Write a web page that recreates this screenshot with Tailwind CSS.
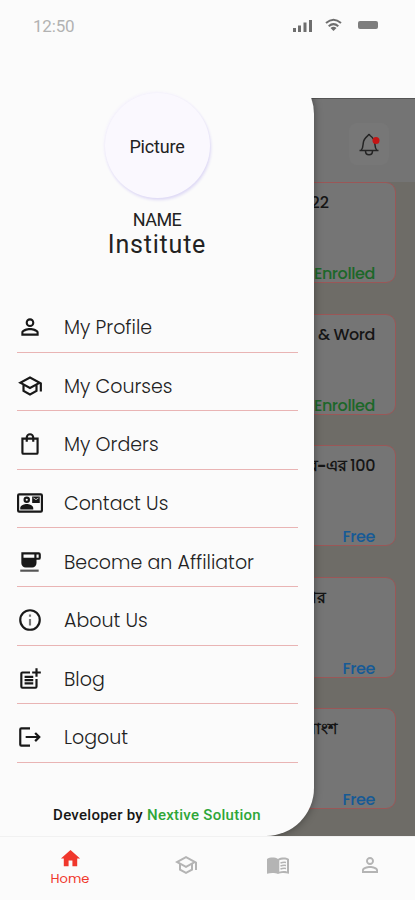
<!DOCTYPE html>
<html lang="en">
<head>
<meta charset="utf-8">
<title>Institute</title>
<script src="https://cdn.jsdelivr.net/npm/@tailwindcss/browser@4"></script>
</head>
<body class="bg-[#fbfbfb]">
<div class="relative flex h-[900px] w-[415px] flex-col overflow-hidden bg-[#fbfbfb] font-['Poppins',Inter,'Noto_Sans',sans-serif]">
  <!-- Status bar -->
  <div class="flex h-[98px] shrink-0 items-start justify-between pl-[33px] pr-[37px] pt-4">
    <span class="font-[Roboto,sans-serif] text-[17px] leading-5 tracking-[-0.2px] text-[#b2b2b2]">12:50</span>
    <div class="flex items-center pt-[2px]">
      <svg class="h-[13px] w-5" viewBox="0 0 20 13" fill="#6e6e6e"><rect x="0" y="9" width="3" height="4"/><rect x="5" y="6.500" width="3" height="6.500"/><rect x="10.500" y="3.500" width="3" height="9.500"/><rect x="16" y="1" width="3" height="12"/></svg>
      <svg class="ml-3 h-[14px] w-[17px]" viewBox="0 0 17 14" fill="none" stroke="#6e6e6e" stroke-width="2"><path d="M1 5Q8.500-1.500 16 5"/><path d="M3.700 8.200Q8.500 4 13.300 8.200"/><path d="M5.500 10Q8.500 7.500 11.500 10L8.500 13Z" fill="#6e6e6e" stroke="none"/></svg>
      <div class="ml-4 h-2 w-5 rounded-[2px] bg-[#7d7d7d]"></div>
    </div>
  </div>

  <!-- Dimmed course list -->
  <main class="flex h-[738px] shrink-0 flex-col overflow-hidden border-t border-[#555] bg-[#6e6c67]">
    <header class="flex h-[83px] shrink-0 items-start justify-end bg-[#747474] pr-[26px] pt-[24px]">
      <div class="flex h-[42px] w-10 items-center justify-center rounded-lg bg-[#777]">
        <svg class="h-6 w-6" viewBox="0 0 24 24" fill="none" stroke="#242424" stroke-width="1.500" stroke-linejoin="round"><path d="M2.500 18.500h19M4 18.500c2-2 2-4 2.200-7C6.500 7 8.500 5.500 11 3.500q1-2 2 0c3 2 4.500 4.500 4.800 8 .2 3 .2 5 2.200 7M8.500 19c0 5 7 5 7 0"/><circle cx="19" cy="8.500" r="3.500" fill="#c51414" stroke="none"/></svg>
      </div>
    </header>
    <div class="flex flex-col gap-[30.500px] pl-[18px] pr-[19px] text-right text-base font-medium leading-6 text-[#151515] [&>section]:flex [&>section]:h-[101px] [&>section]:shrink-0 [&>section]:flex-col [&>section]:justify-between [&>section]:rounded-[10px] [&>section]:border [&>section]:border-[#9a5757] [&>section]:bg-[#757575] [&>section]:pr-5 [&>section]:pt-[8px] [&_p]:-mb-[4px] [&_p]:tracking-[-0.4px]">
      <section><h2 class="pr-[46px]">22</h2><p class="text-[#1c6729]">Enrolled</p></section>
      <section><h2 class="tracking-[-0.4px]">&amp; Word</h2><p class="text-[#1c6729]">Enrolled</p></section>
      <section><h2 class="tracking-[-0.4px]"><span class="font-bold">র-এর</span> 100</h2><p class="text-[#165a96]">Free</p></section>
      <section><h2 class="pr-[49px] font-bold">ার</h2><p class="text-[#165a96]">Free</p></section>
      <section><h2 class="pr-[38px] font-bold">বাংশ</h2><p class="text-[#165a96]">Free</p></section>
    </div>
  </main>

  <!-- Bottom navigation -->
  <nav class="relative z-10 flex h-16 shrink-0 items-start border-t border-[#f1f1f1] bg-[#fbfbfb] text-[#b4b4b4]">
    <div class="flex w-[140px] flex-col items-center pt-2.5 text-[#f0372c]">
      <svg class="h-[23px] w-[23px]" viewBox="0 0 24 24" fill="currentColor"><path d="M10 20v-6h4v6h5v-8h3L12 3 2 12h3v8z"/></svg>
      <span class="text-[13px] leading-[18px]">Home</span>
    </div>
    <div class="flex w-[92px] justify-center pt-4"><svg class="h-6 w-6" viewBox="0 0 24 24" fill="currentColor"><path d="M12 3 1 9l4 2.180v6L12 21l7-3.820v-6l2-1.090V17h2V9L12 3zm6.820 6L12 12.720 5.180 9 12 5.280 18.820 9zM17 16l-5 2.720L7 16v-3.730L12 15l5-2.730V16z"/></svg></div>
    <div class="flex w-[92px] justify-center pt-4"><svg class="h-6 w-6" viewBox="0 0 24 24" fill="currentColor"><path d="M12 6C10.500 4.900 8.400 4.500 6.500 4.500S2.450 4.900 1 6v14.700C2.900 20.200 4.700 20 6.500 20c1.900 0 4 .400 5.500 1z"/><path d="M21 5c-1.110-.35-2.330-.5-3.500-.5-1.950 0-4.050.4-5.500 1.500v15c1.350-.6 3.800-1 5.500-1s3.600.2 5.500.7V6c-.6-.45-1.250-.75-2-1zm0 13.500c-1.100-.35-2.300-.5-3.500-.5-1.500 0-3 .3-4.200.8V7.300C14.600 6.800 16.200 6.500 17.500 6.500c1.200 0 2.400.15 3.500.5z"/><path d="M14.500 10q2.800-1 5.500-.5M14.500 13q2.800-1 5.500-.5M14.500 16q2.800-1 5.500-.5" fill="none" stroke="currentColor" stroke-width="1.500"/></svg></div>
    <div class="flex w-[91px] justify-center pt-4"><svg class="h-6 w-6" viewBox="0 0 24 24" fill="currentColor"><path d="M12 5.900a2.100 2.100 0 1 1 0 4.200 2.100 2.100 0 0 1 0-4.200m0 9c2.970 0 6.100 1.460 6.100 2.100v1.100H5.900V17c0-.64 3.130-2.100 6.100-2.100M12 4C9.790 4 8 5.790 8 8s1.790 4 4 4 4-1.790 4-4-1.790-4-4-4zm0 9c-2.670 0-8 1.340-8 4v3h16v-3c0-2.660-5.330-4-8-4z"/></svg></div>
  </nav>

  <!-- Drawer over the page -->
  <div class="absolute left-0 top-[98px] h-[738px] w-[415px] overflow-hidden">
    <div class="absolute -top-[32px] left-0 h-[770px] w-[314px] rounded-r-[48px] bg-[#fbfbfb] shadow-[0_0_8px_rgba(0,0,0,0.4)]"></div>
  </div>
  <aside class="absolute left-0 top-[93px] flex h-[743px] w-[314px] flex-col">
    <div class="flex h-[201px] shrink-0 flex-col items-center font-[Roboto,sans-serif] text-[#222]">
      <div class="flex h-[105px] w-[105px] items-center justify-center rounded-full bg-[#faf8fe] text-[18px] tracking-[-0.2px] shadow-[1px_2px_3px_#ddd8f5,-1px_-1px_3px_#f4f1fc]"><span class="pt-0.5">Picture</span></div>
      <p class="mt-3 text-[18px] leading-5 tracking-[-0.5px]">NAME</p>
      <p class="pt-0.5 text-[25px] leading-[26px] tracking-[0.8px]">Institute</p>
    </div>
    <ul class="ml-[17px] w-[281px] shrink-0 text-[19px] font-light leading-6 text-[#222] [&_svg]:size-[26px] [&_svg]:shrink-0 [&_svg]:fill-[#181818] [&>li]:flex [&>li]:h-[58.600px] [&>li]:items-center [&>li]:gap-[21px] [&>li]:border-b-[1.500px] [&>li]:border-[#e9b4b4] [&>li]:pt-[9px] [&_span]:pt-[2px]">
      <li><svg viewBox="0 0 24 24"><path d="M12 5.900a2.100 2.100 0 1 1 0 4.200 2.100 2.100 0 0 1 0-4.200m0 9c2.970 0 6.100 1.460 6.100 2.100v1.100H5.900V17c0-.64 3.130-2.100 6.100-2.100M12 4C9.790 4 8 5.790 8 8s1.790 4 4 4 4-1.790 4-4-1.790-4-4-4zm0 9c-2.670 0-8 1.340-8 4v3h16v-3c0-2.660-5.330-4-8-4z"/></svg><span>My Profile</span></li>
      <li><svg viewBox="0 0 24 24"><path d="M12 3 1 9l4 2.180v6L12 21l7-3.820v-6l2-1.090V17h2V9L12 3zm6.820 6L12 12.720 5.180 9 12 5.280 18.820 9zM17 16l-5 2.720L7 16v-3.730L12 15l5-2.730V16z"/></svg><span>My Courses</span></li>
      <li><svg viewBox="0 0 24 24"><path d="M20 6h-4a4 4 0 0 0-8 0H4v14a2 2 0 0 0 2 2h12a2 2 0 0 0 2-2zM12 4a2 2 0 0 1 2 2h-4a2 2 0 0 1 2-2zm6 16H6V8h2v2h2V8h4v2h2V8h2z"/></svg><span>My Orders</span></li>
      <li><svg viewBox="0 0 24 24"><path fill-rule="evenodd" d="M2 3h20a2 2 0 0 1 2 2v14a2 2 0 0 1-2 2H2a2 2 0 0 1-2-2V5a2 2 0 0 1 2-2zm0 2v14h20V5zM9 6a3 3 0 1 1 0 6 3 3 0 0 1 0-6m0 2a1 1 0 1 0 0 2 1 1 0 0 0 0-2M3 18v-1.400c0-2.500 4-3.600 6-3.600s6 1.100 6 3.600V18zM14 6h7v6h-7zm1.200 1.500 2.300 1.700 2.300-1.700v-.500l-2.300 1.500L15.200 7z"/></svg><span>Contact Us</span></li>
      <li><svg viewBox="0 0 24 24"><path fill-rule="evenodd" d="M20 3H4v10a4 4 0 0 0 4 4h6a4 4 0 0 0 4-4v-3h2a2 2 0 0 0 2-2V5a2 2 0 0 0-2-2zm0 5h-2V5h2zM6 5h10v3H6z"/><path d="M3 19h17v2H3z" fill="#555"/></svg><span>Become an Affiliator</span></li>
      <li><svg viewBox="0 0 24 24"><path d="M12 2a10 10 0 1 0 0 20 10 10 0 0 0 0-20zm0 18a8 8 0 1 1 0-16 8 8 0 0 1 0 16z"/><path fill="#777" d="M11 7h2v2h-2zm0 4h2v6h-2z"/></svg><span>About Us</span></li>
      <li><svg viewBox="0 0 24 24"><path d="M17 19.220H5V7h7V5H5a2 2 0 0 0-2 2v12a2 2 0 0 0 2 2h12a2 2 0 0 0 2-2v-7h-2z"/><path d="M19 2h-2v3h-3v2h3v3h2V7h3V5h-3zM7 9h8v2H7zM7 12h8v2H7zM7 15h8v2H7z"/></svg><span>Blog</span></li>
      <li><svg viewBox="0 0 24 24"><path d="M12 5V3H4a2 2 0 0 0-2 2v14a2 2 0 0 0 2 2h8v-2H4V5zM17.500 7.500 16 9l2.200 2H8v2h10.200L16 15l1.500 1.500L22 12z"/></svg><span>Logout</span></li>
    </ul>
    <p class="pt-[40px] text-center font-[Roboto,sans-serif] text-[15px] font-medium leading-6 tracking-[0.270px] text-[#161616]">Developer by <span class="text-[#2ea638]">Nextive Solution</span></p>
  </aside>
</div>
</body>
</html>
